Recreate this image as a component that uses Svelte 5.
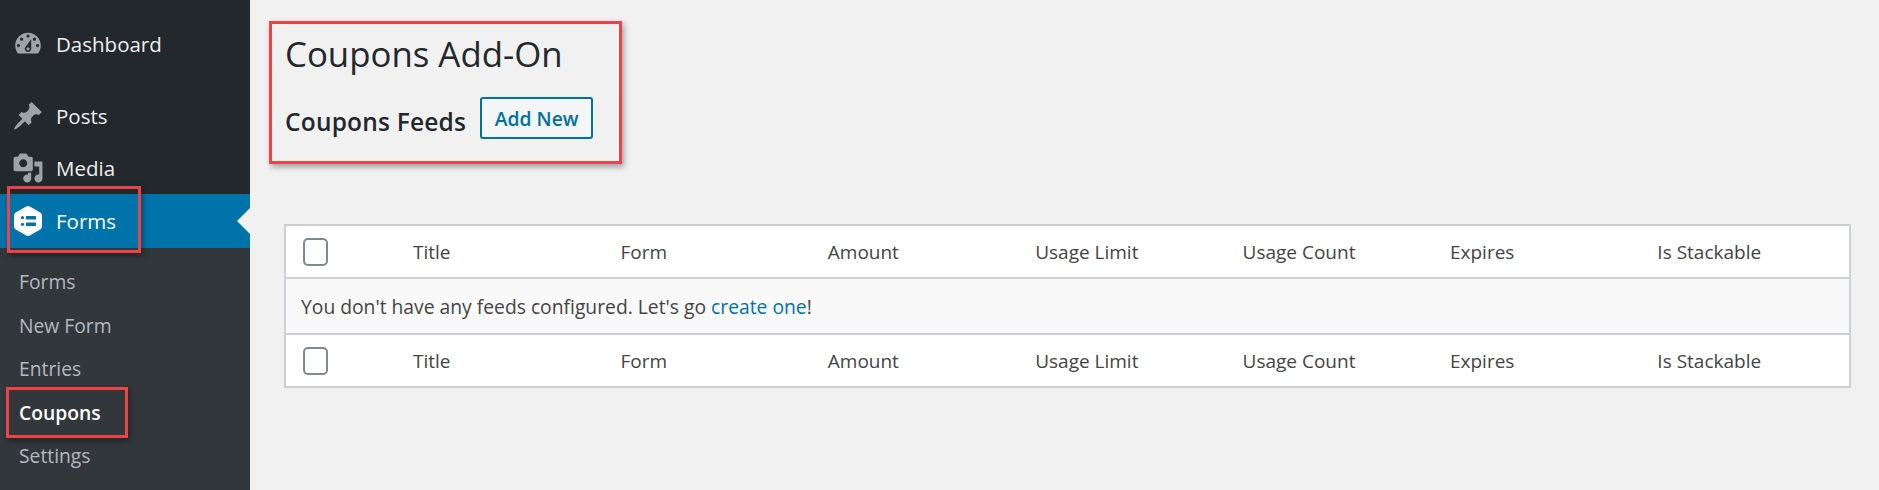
<script>
    let columns = ["Title", "Form", "Amount", "Usage Limit", "Usage Count", "Expires", "Is Stackable"];
    let submenu = ["Forms", "New Form", "Entries", "Coupons", "Settings"];
</script>

<div class="page">
    <nav class="sidebar">
        <ul class="menu">
            <li class="item dashboard">
                <svg class="icon" viewBox="0 0 20 20"><path d="M3.76 16h12.48c1.1-1.37 1.76-3.11 1.76-5 0-4.42-3.58-8-8-8s-8 3.58-8 8c0 1.89.66 3.63 1.76 5zM10 4c.55 0 1 .45 1 1s-.45 1-1 1-1-.45-1-1 .45-1 1-1zM6 6c.55 0 1 .45 1 1s-.45 1-1 1-1-.45-1-1 .45-1 1-1zm8 0c.55 0 1 .45 1 1s-.45 1-1 1-1-.45-1-1 .45-1 1-1zm-5.37 5.55L12 7v6c0 1.1-.9 2-2 2s-2-.9-2-2c0-.57.24-1.08.63-1.45zM4 10c.55 0 1 .45 1 1s-.45 1-1 1-1-.45-1-1 .45-1 1-1zm12 0c.55 0 1 .45 1 1s-.45 1-1 1-1-.45-1-1 .45-1 1-1zm-5 3c0-.55-.45-1-1-1s-1 .45-1 1 .45 1 1 1 1-.45 1-1z" /></svg>
                Dashboard
            </li>
            <li class="item">
                <svg class="icon" viewBox="0 0 20 20"><path d="M10.44 3.02l1.82-1.82 6.36 6.35-1.83 1.82c-1.05-.68-2.48-.57-3.41.36l-.75.75c-.92.93-1.04 2.35-.35 3.41l-1.83 1.82-2.41-2.41-2.8 2.79c-.42.42-3.38 2.71-3.8 2.29s1.86-3.39 2.28-3.81l2.79-2.79L4.1 9.36l1.83-1.82c1.05.69 2.48.57 3.4-.36l.75-.75c.93-.92 1.05-2.35.36-3.41z" /></svg>
                Posts
            </li>
            <li class="item">
                <svg class="icon" viewBox="0 0 20 20"><path d="M13 11V4c0-.55-.45-1-1-1h-1.67L9 1H5L3.67 3H2c-.55 0-1 .45-1 1v7c0 .55.45 1 1 1h10c.55 0 1-.45 1-1zM7 4.5c1.38 0 2.5 1.12 2.5 2.5S8.38 9.5 7 9.5 4.5 8.38 4.5 7 5.62 4.5 7 4.5zM14 6h5v10.5c0 1.38-1.12 2.5-2.5 2.5S14 17.88 14 16.5s1.12-2.5 2.5-2.5c.17 0 .34.02.5.05V9h-3V6zm-4 8.05V13h2v3.5c0 1.38-1.12 2.5-2.5 2.5S7 17.88 7 16.5 8.12 14 9.5 14c.17 0 .34.02.5.05z" /></svg>
                Media
            </li>
            <li class="item active">
                <svg class="icon" viewBox="0 0 32 32">
                    <path class="hex" d="M14.2 1.5q1.8-1 3.6 0l10.4 6q1.8 1 1.8 3v11q0 2-1.8 3l-10.4 6q-1.8 1-3.6 0l-10.4-6q-1.8-1-1.8-3v-11q0-2 1.8-3z" />
                    <circle class="mark" cx="10.5" cy="12.7" r="1.6" />
                    <circle class="mark" cx="10.5" cy="19.3" r="1.6" />
                    <rect class="mark" x="14" y="11" width="10" height="3.4" rx="0.5" />
                    <rect class="mark" x="14" y="17.6" width="10" height="3.4" rx="0.5" />
                </svg>
                Forms
                <span class="arrow"></span>
            </li>
        </ul>
        <ul class="submenu">
            {#each submenu as name}
                <li class:current={name === "Coupons"}>{name}</li>
            {/each}
        </ul>
    </nav>

    <main class="content">
        <h1>Coupons Add-On</h1>
        <div class="feeds">
            <h2>Coupons Feeds</h2>
            <button>Add New</button>
        </div>

        <div class="table">
            <div class="row">
                <span class="check"></span>
                {#each columns as col}
                    <span>{col}</span>
                {/each}
            </div>
            <div class="message">
                You don't have any feeds configured. Let's go <a href="#top">create one</a>!
            </div>
            <div class="row">
                <span class="check"></span>
                {#each columns as col}
                    <span>{col}</span>
                {/each}
            </div>
        </div>
    </main>

    <div class="callout forms-box"></div>
    <div class="callout coupons-box"></div>
    <div class="callout title-box"></div>
</div>

<style>
    :global(body) {
        margin: 0;
    }

    .page {
        position: relative;
        display: flex;
        height: 490px;
        overflow: hidden;
        background: #f1f1f1;
        font-family: "Open Sans", "Noto Sans", sans-serif;
    }

    .sidebar {
        width: 250px;
        flex-shrink: 0;
        background: #23282d;
        display: flex;
        flex-direction: column;
    }

    ul {
        list-style: none;
        margin: 0;
        padding: 0;
    }

    .menu {
        padding-top: 18px;
    }

    .item {
        position: relative;
        display: flex;
        align-items: center;
        gap: 12px;
        height: 52px;
        padding-left: 12px;
        color: #eeeeee;
        font-size: 20.5px;
    }

    .dashboard {
        margin-bottom: 20px;
    }

    .icon {
        width: 32px;
        height: 32px;
        fill: #9ea3a8;
        flex-shrink: 0;
    }

    .active {
        height: 54px;
        background: #0073aa;
        color: #fff;
    }

    .hex {
        fill: #fff;
    }

    .mark {
        fill: #0073aa;
    }

    .arrow {
        position: absolute;
        right: 0;
        top: 50%;
        margin-top: -13px;
        border: 13px solid transparent;
        border-left-width: 0;
        border-right-color: #f1f1f1;
    }

    .submenu {
        flex: 1;
        background: #32373c;
        padding-top: 12px;
    }

    .submenu li {
        height: 43.5px;
        line-height: 43.5px;
        padding-left: 19px;
        color: #b4b9be;
        font-size: 19.3px;
    }

    .submenu .current {
        color: #fff;
        font-weight: 600;
    }

    .content {
        flex: 1;
        padding: 0 28px 0 34px;
        min-width: 0;
    }

    h1 {
        margin: 31px 0 0 1px;
        font-size: 34.8px;
        line-height: 46px;
        font-weight: 400;
        color: #23282d;
    }

    .feeds {
        display: flex;
        align-items: center;
        gap: 14px;
        margin: 20px 0 0 1px;
    }

    h2 {
        margin: 7px 0 0;
        font-size: 24.5px;
        letter-spacing: 0.2px;
        font-weight: 600;
        color: #23282d;
    }

    button {
        height: 42px;
        width: 113px;
        padding: 0;
        border: 2px solid #0071a1;
        border-radius: 3px;
        background: #f3f5f6;
        color: #0071a1;
        font: 600 19.3px "Open Sans", "Noto Sans", sans-serif;
    }

    .table {
        margin-top: 85px;
        border: 2px solid #ccd0d4;
        background: #fff;
        color: #444;
        font-size: 19px;
    }

    .row {
        display: grid;
        grid-template-columns: 127px repeat(7, 207.4px);
        align-items: center;
        height: 51px;
    }

    .check {
        justify-self: start;
        margin-left: 17px;
        width: 21px;
        height: 24px;
        border: 2px solid #7e8993;
        border-radius: 5px;
        background: #fff;
    }

    .message {
        height: 54px;
        line-height: 56px;
        padding-left: 15px;
        background: #f9f9f9;
        border-top: 2px solid #ccd0d4;
        border-bottom: 2px solid #ccd0d4;
        font-size: 19.3px;
    }

    a {
        color: #0073aa;
        text-decoration: none;
    }

    .callout {
        position: absolute;
        border: 3.5px solid #ea4449;
        box-shadow: 2px 3px 6px rgba(0, 0, 0, 0.35);
        box-sizing: border-box;
    }

    .forms-box {
        left: 7px;
        top: 186px;
        width: 134px;
        height: 67px;
    }

    .coupons-box {
        left: 6px;
        top: 387px;
        width: 122px;
        height: 51px;
    }

    .title-box {
        left: 269px;
        top: 21px;
        width: 353px;
        height: 143px;
    }
</style>
